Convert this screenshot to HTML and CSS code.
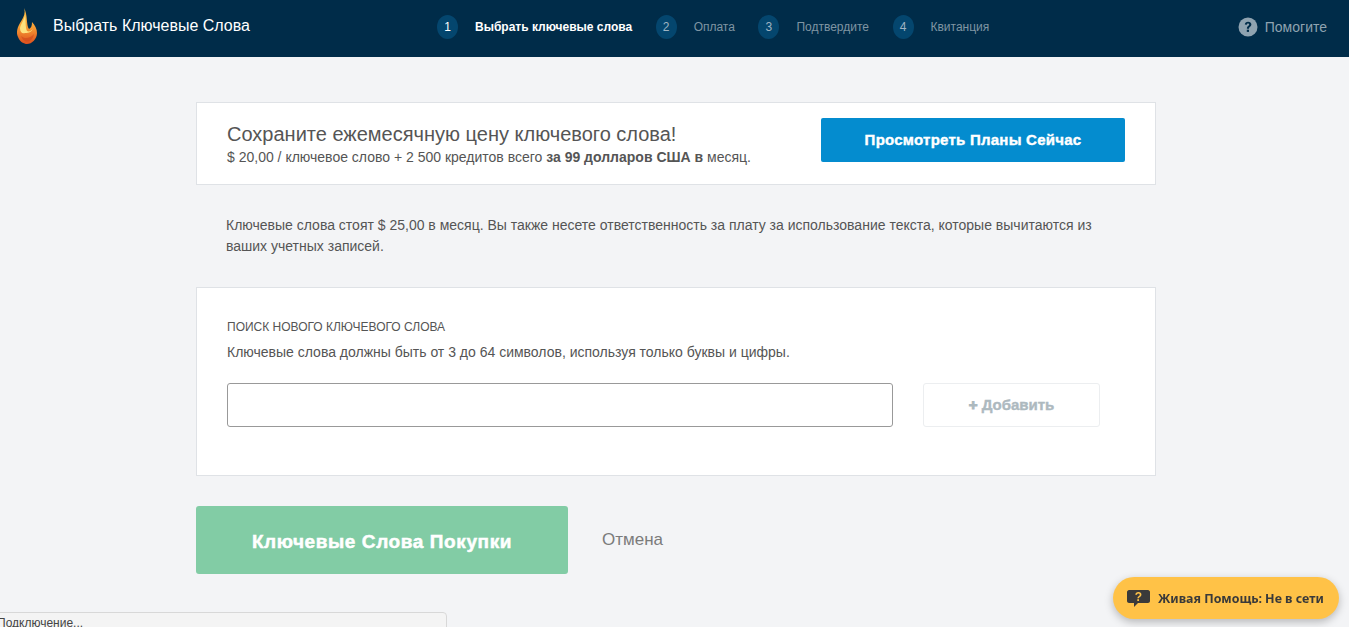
FILE: index.html
```html
<!DOCTYPE html>
<html lang="ru">
<head>
    <meta charset="UTF-8">
    <meta name="viewport" content="width=device-width, initial-scale=1.0">
    <title>Выбрать Ключевые Слова</title>
    <link rel="stylesheet" href="styles.css">
</head>
<body>

<div class="topbar">
    <div class="brand">
        <svg class="flame" width="20" height="36" viewBox="0 0 20 36">
            <defs>
                <linearGradient id="flameFill" x1="0" y1="0" x2="0" y2="1">
                    <stop offset="0" stop-color="#f9b83f"/>
                    <stop offset="0.5" stop-color="#f8a236"/>
                    <stop offset="1" stop-color="#dd4f1e"/>
                </linearGradient>
            </defs>
            <path d="M7 0 C9 6 6 10 3 15 C0 20 -1 25 1 29 C3 34 7 36 10 36 C15 36 20 31 20 25 C20 21 18 17 15 14 C15 18 14 20 12 21 C9 17 11 7 7 0 Z" fill="url(#flameFill)"/>
            <path d="M8 6 C8 11 4 15 3 20 C3 24 5 26 8 25 C12 25 15 24 16 20 C15 23 12 24 10 23 C8 19 9 11 8 6 Z" fill="#fde27f"/>
            <path d="M4 28 C7 31 13 31 17 26 C16 32 12 34 9 33.500 C7 33 5 31 4 28 Z" fill="#c9401a" opacity="0.5"/>
        </svg>
        <span class="brand-title">Выбрать Ключевые Слова</span>
    </div>
    <div class="steps">
        <div class="step step-active"><span class="step-num">1</span><span class="step-label">Выбрать ключевые слова</span></div>
        <div class="step"><span class="step-num">2</span><span class="step-label">Оплата</span></div>
        <div class="step"><span class="step-num">3</span><span class="step-label">Подтвердите</span></div>
        <div class="step"><span class="step-num">4</span><span class="step-label">Квитанция</span></div>
    </div>
    <div class="help">
        <svg width="20" height="20" viewBox="0 0 20 20">
            <circle cx="10" cy="10" r="9.500" fill="#8fa3b0"/>
            <path d="M6.800 7.600 C6.800 5.700 8.300 4.700 10.100 4.700 C12 4.700 13.400 5.800 13.400 7.500 C13.400 9.700 10.900 9.800 10.900 11.700 L8.900 11.700 C8.900 9 11.200 8.900 11.200 7.600 C11.200 6.900 10.700 6.500 10 6.500 C9.300 6.500 8.900 7 8.800 7.700 Z" fill="#002c49"/>
            <rect x="8.800" y="12.700" width="2.200" height="2.200" fill="#002c49"/>
        </svg>
        <span>Помогите</span>
    </div>
</div>

<div class="main">
    <div class="card promo">
        <div class="promo-text">
            <h2>Сохраните ежемесячную цену ключевого слова!</h2>
            <p>$ 20,00 / ключевое слово + 2 500 кредитов всего <strong>за 99 долларов США в</strong> месяц.</p>
        </div>
        <a class="btn-plans" href="#">Просмотреть Планы Сейчас</a>
    </div>

    <p class="note">Ключевые слова стоят $ 25,00 в месяц. Вы также несете ответственность за плату за использование текста, которые вычитаются из ваших учетных записей.</p>

    <div class="card search">
        <div class="search-title">ПОИСК НОВОГО КЛЮЧЕВОГО СЛОВА</div>
        <p class="search-hint">Ключевые слова должны быть от 3 до 64 символов, используя только буквы и цифры.</p>
        <div class="search-row">
            <input type="text" class="search-input">
            <button class="btn-add" type="button"><span class="plus">+</span> Добавить</button>
        </div>
    </div>

    <div class="actions">
        <button class="btn-buy" type="button">Ключевые Слова Покупки</button>
        <a class="cancel" href="#">Отмена</a>
    </div>
</div>

<div class="status">Подключение...</div>

<div class="chat">
    <svg width="23" height="17" viewBox="0 0 23 17">
        <path d="M2 0 H21 C22 0 23 1 23 2 V11 C23 12 22 13 21 13 H11 L7 17 V13 H2 C1 13 0 12 0 11 V2 C0 1 1 0 2 0 Z" fill="#3a3a3a"/>
        <text x="11.500" y="11" class="chat-mark">?</text>
    </svg>
    <span>Живая Помощь: Не в сети</span>
</div>

</body>
</html>
```

FILE: styles.css
```css
html, body {
    height: 100%;
}
body {
    margin: 0;
    background: #f3f4f6;
    font-family: "Liberation Sans", Arial, sans-serif;
    color: #555;
    overflow: hidden;
}
.topbar {
    height: 57px;
    background: #002c49;
    display: flex;
    align-items: center;
    padding: 0 22px 3px 17px;
    box-sizing: border-box;
}
.brand {
    display: flex;
    align-items: center;
    width: 420px;
}
.flame {
    margin-right: 16px;
    margin-top: -2px;
}
.brand-title {
    color: #fff;
    font-size: 16px;
    margin-top: -2px;
}
.steps {
    display: flex;
    flex: 1;
    align-items: center;
}
.step {
    display: flex;
    align-items: center;
    margin-right: 23.500px;
    font-size: 12px;
    color: #7f95a3;
}
.step-num {
    width: 21px;
    height: 24px;
    border-radius: 50%;
    background: #04466e;
    color: #9fb4c2;
    display: flex;
    align-items: center;
    justify-content: center;
    margin-right: 17px;
}
.step-active {
    color: #fff;
    font-weight: bold;
}
.step-active .step-num {
    color: #fff;
    font-weight: normal;
}
.help {
    display: flex;
    align-items: center;
    gap: 7px;
    font-size: 14px;
    color: #8fa3b0;
}
.main {
    width: 960px;
    margin: 45px 0 0 196px;
}
.card {
    background: #fff;
    border: 1px solid #dfe2e6;
    box-sizing: border-box;
}
.promo {
    height: 83px;
    display: flex;
    align-items: flex-start;
    justify-content: space-between;
    padding: 15px 30px 0;
}
.promo h2 {
    margin: 4px 0 0;
    font-size: 20px;
    font-weight: normal;
    line-height: 24px;
}
.promo p {
    margin: 2px 0 0;
    font-size: 14px;
    line-height: 18px;
}
.btn-plans {
    width: 304px;
    height: 44px;
    box-sizing: border-box;
    padding-bottom: 2px;
    background: #048ccf;
    border-radius: 2px;
    color: #fff;
    font-size: 15px;
    font-weight: bold;
    letter-spacing: 0.25px;
    -webkit-text-stroke: 0.4px #fff;
    text-decoration: none;
    display: flex;
    align-items: center;
    justify-content: center;
}
.note {
    margin: 30px 30px 30px;
    font-size: 14px;
    line-height: 21px;
}
.search {
    height: 189px;
    padding: 30px 30px 0;
}
.search-title {
    font-size: 12px;
    line-height: 18px;
}
.search-hint {
    margin: 7px 0 0;
    font-size: 14px;
    line-height: 18px;
}
.search-row {
    display: flex;
    margin-top: 22px;
}
.search-input {
    width: 666px;
    height: 44px;
    box-sizing: border-box;
    border: 1px solid #999;
    border-radius: 3px;
    background: #fff;
    margin-right: 30px;
    padding: 0 10px;
}
.btn-add {
    width: 177px;
    height: 44px;
    border: 1px solid #eceef0;
    border-radius: 3px;
    background: #fff;
    color: #adb9bf;
    font-family: inherit;
    font-size: 15px;
    font-weight: bold;
    -webkit-text-stroke: 0.4px #adb9bf;
    padding: 0 0 2px;
}
.plus {
    -webkit-text-stroke: 1px #adb9bf;
}
.actions {
    display: flex;
    align-items: center;
    margin-top: 30px;
}
.btn-buy {
    width: 372px;
    height: 68px;
    border: 0;
    border-radius: 3px;
    background: #82cca5;
    color: #fff;
    font-family: inherit;
    font-size: 19px;
    font-weight: bold;
    letter-spacing: 0.6px;
    -webkit-text-stroke: 0.5px #fff;
    padding-top: 5px;
}
.cancel {
    margin: 0 0 0 34px;
    font-size: 17px;
    color: #7b7b7b;
    text-decoration: none;
}
.status {
    position: fixed;
    left: -6px;
    top: 612px;
    width: 453px;
    height: 30px;
    box-sizing: border-box;
    padding: 3px 0 0 2px;
    background: #f4f4f4;
    border: 1px solid #d8d8d8;
    border-radius: 4px;
    font-size: 12px;
    color: #444;
}
.chat {
    position: fixed;
    left: 1113px;
    top: 577px;
    width: 226px;
    height: 42px;
    box-sizing: border-box;
    padding-left: 14px;
    border-radius: 21px;
    background: #ffc247;
    box-shadow: 0 3px 8px rgba(0, 0, 0, 0.25);
    display: flex;
    align-items: center;
    gap: 8px;
    font-family: "Noto Sans", sans-serif;
    font-size: 12.400px;
    font-weight: 700;
    color: #3a3a3a;
}
.chat-mark {
    fill: #ffc247;
    font-family: "Liberation Sans", sans-serif;
    font-size: 12px;
    font-weight: bold;
    text-anchor: middle;
}
```
